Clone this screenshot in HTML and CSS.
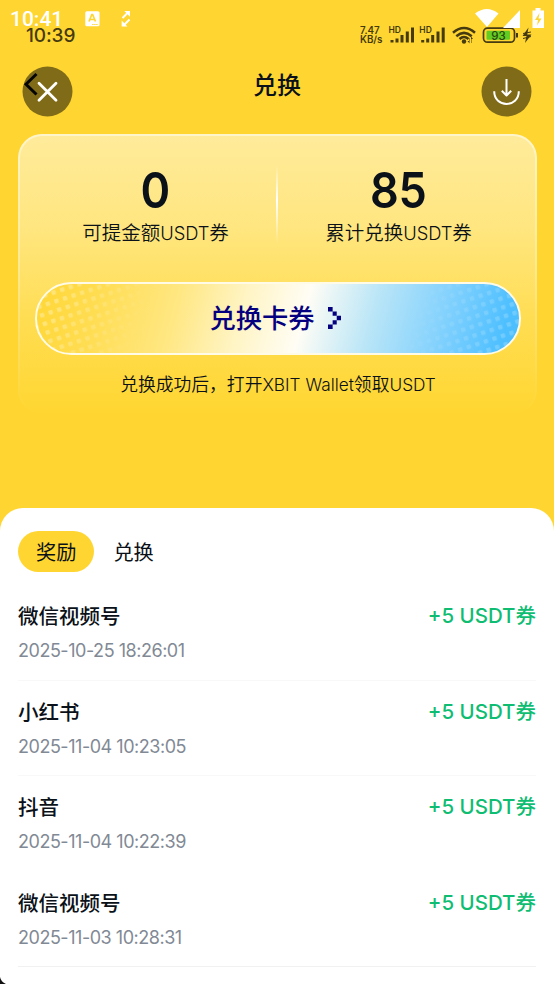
FILE: index.html
```html
<!DOCTYPE html>
<html lang="zh-CN">
<head>
<meta charset="utf-8">
<title>兑换</title>
<link rel="stylesheet" href="styles.css">
</head>
<body>
<div class="screen">
  <div class="system-bar">
    <span class="system-time">10:41</span>
    <svg class="system-app" width="15" height="16" viewBox="0 0 15 16"><rect x=".3" y=".3" width="14.2" height="15" rx="1.5" fill="#fff"/><path d="M4 10.500 6.800 3.500h.8l2.900 7M5 8.500h4.500" fill="none" stroke="#ffd631" stroke-width="1.700"/><path d="M7.200 13.500h6" stroke="#ffd631" stroke-dasharray="1.400 .6"/></svg>
    <svg class="system-sync" width="10" height="18" viewBox="0 0 10 18"><path d="M1.500 8 7.500 2M8.500 9.500l-6 6" fill="none" stroke="#fff" stroke-width="2"/><path d="M3.300 1H9v5.800zM.7 10.500v6.100h5.700z" fill="#fff"/></svg>
    <svg class="system-icons" width="72" height="22" viewBox="0 0 72 22"><path d="M0 5.500Q12-3.500 23.500 5.500L12 19zM28 20 45 2v18z" fill="#fff"/><path d="M57.500 2.500h3V0h5v2.500h3.500v17.500H57.500z" fill="#fff"/><path d="m64.500 5-4.500 7h3l-1 5.500 4.500-7h-3z" fill="#ffd631"/></svg>
  </div>
  <div class="phone-bar">
    <span class="phone-time">10:39</span>
    <span class="net-speed"><b>7.47</b><b>KB/s</b></span>
    <svg class="phone-icons" width="144" height="22" viewBox="0 0 144 22">
      <g fill="#453a10"><path id="bars" d="M1.500 16h3v2.500h-3zM6.500 14.500h3v4h-3zM11.500 11h3v7.500h-3zM16.800 7.500h3v11h-3zM22 3.500h3v15h-3z"/><use href="#bars" x="30.700"/>
      <text x="-.5" y="8.500" class="hd">HD</text><text x="30.300" y="8.500" class="hd">HD</text>
      <circle cx="75" cy="17.500" r="2.200"/><path d="M80 14v3h-1.500l2 2.500V14zM82.500 19v-4H84l-2-2.500V19z"/></g>
      <path d="M64 8.800q11-9.500 22 0M67.300 12.200q7.700-6.700 15.400 0M70.500 15q4.500-4 9 0" fill="none" stroke="#453a10" stroke-width="2.500"/>
      <rect x="94.500" y="4.200" width="31" height="14" rx="4" fill="none" stroke="#453a10" stroke-width="1.700"/>
      <rect x="97.500" y="6.800" width="23.500" height="9" rx="1" fill="#62cc20"/><path d="M128 9v4.500" stroke="#453a10" stroke-width="2"/>
      <text x="109.500" y="15.600" class="charge">93</text>
      <path d="M139.500 3.500 133.500 12h4l-1.500 7 6.500-8.500h-4.300z" fill="#453a10"/><path d="m134 9.500 8-1.500M134 14.500l8-2" stroke="#453a10" stroke-width="1"/>
    </svg>
  </div>

  <header class="header">
    <svg class="round-button" width="51" height="51" viewBox="0 0 51 51"><circle cx="25.500" cy="25.500" r="25" fill="#806b18"/><path d="M14.500 8 4 18.300 14.500 28.500" fill="none" stroke="#050500" stroke-width="3"/><path d="m17 17.300 17 17m0-17-17 17" stroke="#fff" stroke-width="2.800" stroke-linecap="round"/></svg>
    <h1 class="title">兑换</h1>
    <svg class="round-button" width="51" height="51" viewBox="0 0 51 51"><circle cx="25.500" cy="25.500" r="25" fill="#806b18"/><path d="M25.500 13v16M20.800 24.800l4.700 4.700 4.700-4.700M13.200 25.200c0 17 24.600 17 24.600 0" fill="none" stroke="#fff" stroke-width="2" stroke-linejoin="round"/></svg>
  </header>

  <section class="card">
    <div class="stats">
      <div class="stat"><span class="value">0</span><span class="label">可提金额<span class="latin">USDT</span>券</span></div>
      <div class="divider"></div>
      <div class="stat"><span class="value">85</span><span class="label">累计兑换<span class="latin">USDT</span>券</span></div>
    </div>
    <div class="redeem">
      <svg class="redeem-dots" width="483" height="71" viewBox="0 0 483 71">
        <defs>
          <pattern id="dots" width="9" height="9" patternUnits="userSpaceOnUse" patternTransform="rotate(-18)"><rect x="2" y="2" width="4.500" height="4.500" rx="1" fill="#fff"/></pattern>
          <linearGradient id="leftFade" gradientUnits="userSpaceOnUse" x1="20" y1="15" x2="105" y2="45"><stop stop-color="#fff" stop-opacity=".3"/><stop offset="1" stop-color="#fff" stop-opacity="0"/></linearGradient>
          <linearGradient id="rightFade" gradientUnits="userSpaceOnUse" x1="465" y1="50" x2="375" y2="22"><stop stop-color="#fff" stop-opacity=".2"/><stop offset="1" stop-color="#fff" stop-opacity="0"/></linearGradient>
          <mask id="leftMask"><path d="M0 0h125v71H0z" fill="url(#leftFade)"/></mask>
          <mask id="rightMask"><path d="M355 0h128v71H355z" fill="url(#rightFade)"/></mask>
        </defs>
        <path d="M0 0h125v71H0z" fill="url(#dots)" mask="url(#leftMask)"/><path d="M355 0h128v71H355z" fill="url(#dots)" mask="url(#rightMask)"/>
      </svg>
      <span class="redeem-text">兑换卡券</span>
      <svg class="pixel-arrow" width="13" height="22" viewBox="0 0 14 22" preserveAspectRatio="none"><path d="M0 0h5v4.400h4.400v4.400H14v4.400H9.400v4.400H5V22H0v-4.400h5v-4.400h4.400V8.800H5V4.400H0z" fill="#050080"/></svg>
    </div>
    <p class="hint">兑换成功后，打开<span class="latin">XBIT Wallet</span>领取<span class="latin">USDT</span></p>
  </section>

  <main class="sheet">
    <nav class="tabs"><span class="tab active">奖励</span><span class="tab">兑换</span></nav>
    <div class="row"><div class="info"><span class="name">微信视频号</span><span class="date">2025-10-25 18:26:01</span></div><span class="amount">+5 USDT<span class="unit">券</span></span></div>
    <div class="row"><div class="info"><span class="name">小红书</span><span class="date">2025-11-04 10:23:05</span></div><span class="amount">+5 USDT<span class="unit">券</span></span></div>
    <div class="row faint"><div class="info"><span class="name">抖音</span><span class="date">2025-11-04 10:22:39</span></div><span class="amount">+5 USDT<span class="unit">券</span></span></div>
    <div class="row last"><div class="info"><span class="name">微信视频号</span><span class="date">2025-11-03 10:28:31</span></div><span class="amount">+5 USDT<span class="unit">券</span></span></div>
  </main>
  <svg class="corner" width="6" height="7" viewBox="0 0 6 7"><path d="M0 0q1 5 6 7H0z" fill="#111"/></svg>
</div>
</body>
</html>
```
FILE: styles.css
```css
* { box-sizing: border-box; }
body { margin: 0; font-family: "Noto Sans CJK SC", sans-serif; color: #0b1118; }
.screen { position: relative; width: 554px; height: 984px; overflow: hidden; background: #ffd631; display: flex; flex-direction: column; }
svg { display: block; flex: none; }

.system-bar { position: absolute; inset: 0 0 auto; height: 36px; display: flex; align-items: flex-start; padding: 8px 7px 0 10px; z-index: 1; }
.system-time { width: 75px; font: 500 21px/23px Roboto, sans-serif; color: #fff; }
.system-app { margin-top: 3px; }
.system-sync { margin: 2px 0 0 21px; }
.system-icons { margin-left: auto; }
.phone-bar { height: 50px; display: flex; align-items: flex-start; padding: 24px 21px 0 26px; color: #453a10; }
.phone-time { font: 500 19px/23px Inter, sans-serif; letter-spacing: -.1px; }
.net-speed { display: flex; flex-direction: column; margin: 2px 0 0 auto; width: 29px; font: 600 9.800px/9px Inter, sans-serif; }
.net-speed b { white-space: nowrap; font-weight: inherit; }
.phone-icons { overflow: visible; }
.hd { font: 600 8.500px Inter, sans-serif; }
.charge { font: 500 11.500px Inter, sans-serif; text-anchor: middle; fill: #2c4510; }

.header { height: 84px; padding: 16px 22px 0; display: flex; justify-content: space-between; align-items: flex-start; }
.title { margin: 0; font-size: 24px; line-height: 35px; font-weight: 500; }

.card { position: relative; height: 280px; margin: 0 17px 0 18px; padding: 31px 16px 0 17px; border-radius: 24px; background: linear-gradient(#ffeb9b, #ffe680 33%, #ffdd51 67%, #ffd631); display: flex; flex-direction: column; }
.card::before { content: ""; position: absolute; inset: 0; border-radius: inherit; padding: 2px; background: linear-gradient(#fff5cb, #ffeb95 45%, #ffe06a 70%, #ffd631); mask: linear-gradient(#000 0 0) content-box exclude, linear-gradient(#000 0 0); pointer-events: none; }
.stats { height: 117px; display: flex; margin-right: 2px; }
.stat { flex: 1; display: flex; flex-direction: column; align-items: center; }
.value { height: 50px; font: 600 50px/50px Inter, sans-serif; letter-spacing: -.5px; transform: scaleX(.9); }
.label { margin-top: 3px; font-size: 19.500px; line-height: 28px; font-weight: 350; white-space: nowrap; }
.latin { font-family: Inter, sans-serif; font-size: .94em; letter-spacing: -.05px; }
.divider { width: 2px; height: 78px; background: linear-gradient(transparent, #fff 45%, transparent); }
.redeem { position: relative; height: 73px; border: 2px solid #fffbe6; border-radius: 37px; overflow: hidden; display: flex; justify-content: center; align-items: center; gap: 13px; padding: 0 6px 2px 0; background: linear-gradient(105deg, #ffd735 0%, #ffdd52 13%, #ffe782 29%, #fff4c2 42%, #fffdf5 55%, #b9e5f7 69%, #87d3fd 82%, #4dbfff 96%); }
.redeem-dots { position: absolute; inset: 0; }
.redeem-text { font-size: 26.300px; line-height: 38px; font-weight: 500; color: #050080; white-space: nowrap; position: relative; top: -1px; }
.pixel-arrow { position: relative; }
.hint { margin: 14px 0 0; text-align: center; font-size: 17.800px; line-height: 28px; font-weight: 350; white-space: nowrap; }
.hint .latin { font-size: .97em; letter-spacing: 0; }

.sheet { height: 476px; margin-top: 94px; padding: 23px 18px 0; background: #fff; border-radius: 23px 23px 0 0; }
.tabs { height: 54px; display: flex; gap: 1px; }
.tab { height: 41px; padding: 0 18px; border-radius: 21px; font-size: 20.200px; line-height: 41px; }
.active { background: #ffd631; }
.row { height: 95.600px; display: flex; justify-content: space-between; padding-top: 16px; border-bottom: 1px solid #f8f8f9; }
.faint { border-color: transparent; }
.last { border-color: #f1f1f2; }
.info { display: flex; flex-direction: column; }
.name { font-size: 20.500px; line-height: 29px; font-weight: 500; }
.date { margin-top: 7px; font: 18px/27px Inter, sans-serif; color: #818995; white-space: nowrap; letter-spacing: -.47px; }
.amount { font: 500 20.500px/29px Inter, "Noto Sans CJK SC", sans-serif; color: #0fbd72; white-space: nowrap; }
.unit { letter-spacing: 0; }
.corner { position: absolute; left: 0; bottom: 0; }
```
